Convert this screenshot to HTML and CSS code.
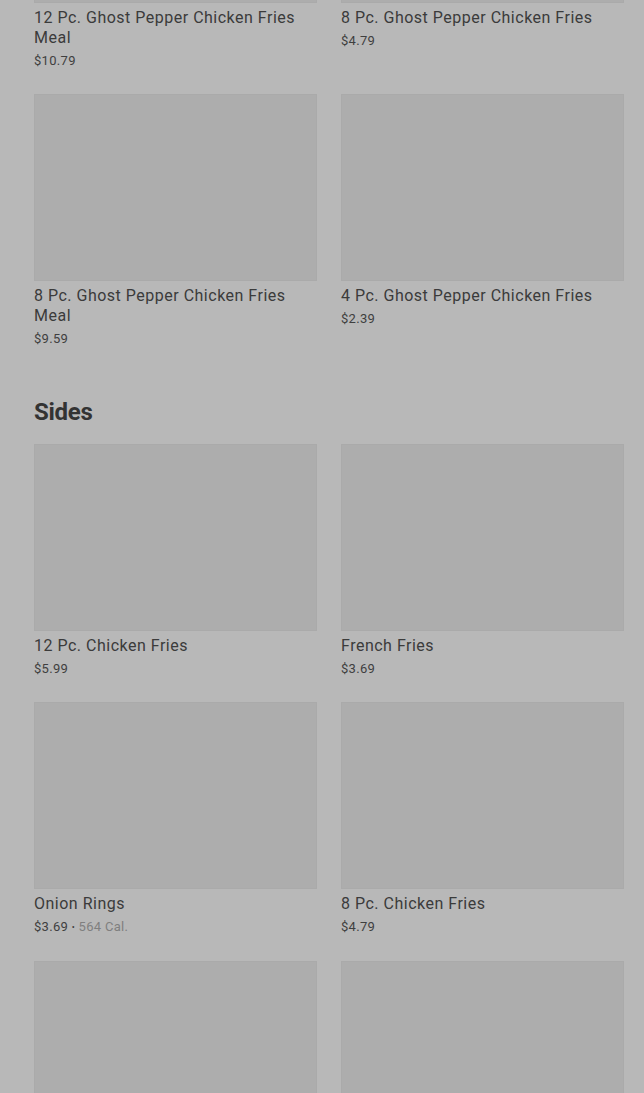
FILE: index.html
```html
<!DOCTYPE html>
<html lang="en">
<head>
    <meta charset="UTF-8">
    <meta name="viewport" content="width=device-width, initial-scale=1.0">
    <title>Menu</title>
    <link rel="stylesheet" href="styles.css">
</head>
<body>

<div class="menu">
    <div class="grid grid-top">
        <div class="item">
            <div class="pic"></div>
            <div class="name">12 Pc. Ghost Pepper Chicken Fries Meal</div>
            <div class="price">$10.79</div>
        </div>
        <div class="item">
            <div class="pic"></div>
            <div class="name">8 Pc. Ghost Pepper Chicken Fries</div>
            <div class="price">$4.79</div>
        </div>
        <div class="item">
            <div class="pic"></div>
            <div class="name">8 Pc. Ghost Pepper Chicken Fries Meal</div>
            <div class="price">$9.59</div>
        </div>
        <div class="item">
            <div class="pic"></div>
            <div class="name">4 Pc. Ghost Pepper Chicken Fries</div>
            <div class="price">$2.39</div>
        </div>
    </div>

    <h2 class="section-title">Sides</h2>
    <div class="grid">
        <div class="item">
            <div class="pic"></div>
            <div class="name">12 Pc. Chicken Fries</div>
            <div class="price">$5.99</div>
        </div>
        <div class="item">
            <div class="pic"></div>
            <div class="name">French Fries</div>
            <div class="price">$3.69</div>
        </div>
        <div class="item">
            <div class="pic"></div>
            <div class="name">Onion Rings</div>
            <div class="price">$3.69 <span class="dot">•</span> <span class="cal">564 Cal.</span></div>
        </div>
        <div class="item">
            <div class="pic"></div>
            <div class="name">8 Pc. Chicken Fries</div>
            <div class="price">$4.79</div>
        </div>
        <div class="item">
            <div class="pic"></div>
        </div>
        <div class="item">
            <div class="pic"></div>
        </div>
    </div>
</div>

</body>
</html>
```

FILE: styles.css
```css
body {
    margin: 0;
    font-family: Roboto, "Liberation Sans", sans-serif;
    background-color: #b8b8b8;
    color: #3a3a3a;
    overflow: hidden;
    height: 1093px;
}
.menu {
    padding: 0 20px 0 34px;
}
.grid {
    display: grid;
    grid-template-columns: 283px 283px;
    column-gap: 24px;
    row-gap: 25px;
}
.grid-top {
    margin-top: -184px; /* the first row is scrolled mostly out of view */
}
.pic {
    height: 187px;
    background-color: #adadad;
    box-shadow: inset 0 0 0 1px #aaaaaa;
}
.name {
    margin-top: 5px;
    font-size: 16px;
    line-height: 20px;
    letter-spacing: 0.5px;
    color: #3b3b3b;
}
.price {
    margin-top: 4px;
    font-size: 13px;
    line-height: 17px;
    letter-spacing: 0.3px;
    color: #3f3f3f;
}
.dot {
    font-size: 9px;
    vertical-align: 1px;
}
.cal {
    color: #7f7f7f;
}
.section-title {
    margin: 51px 0 18px;
    font-size: 24px;
    line-height: 28px;
    font-weight: 700;
    color: #333;
    letter-spacing: -0.3px;
}
```
